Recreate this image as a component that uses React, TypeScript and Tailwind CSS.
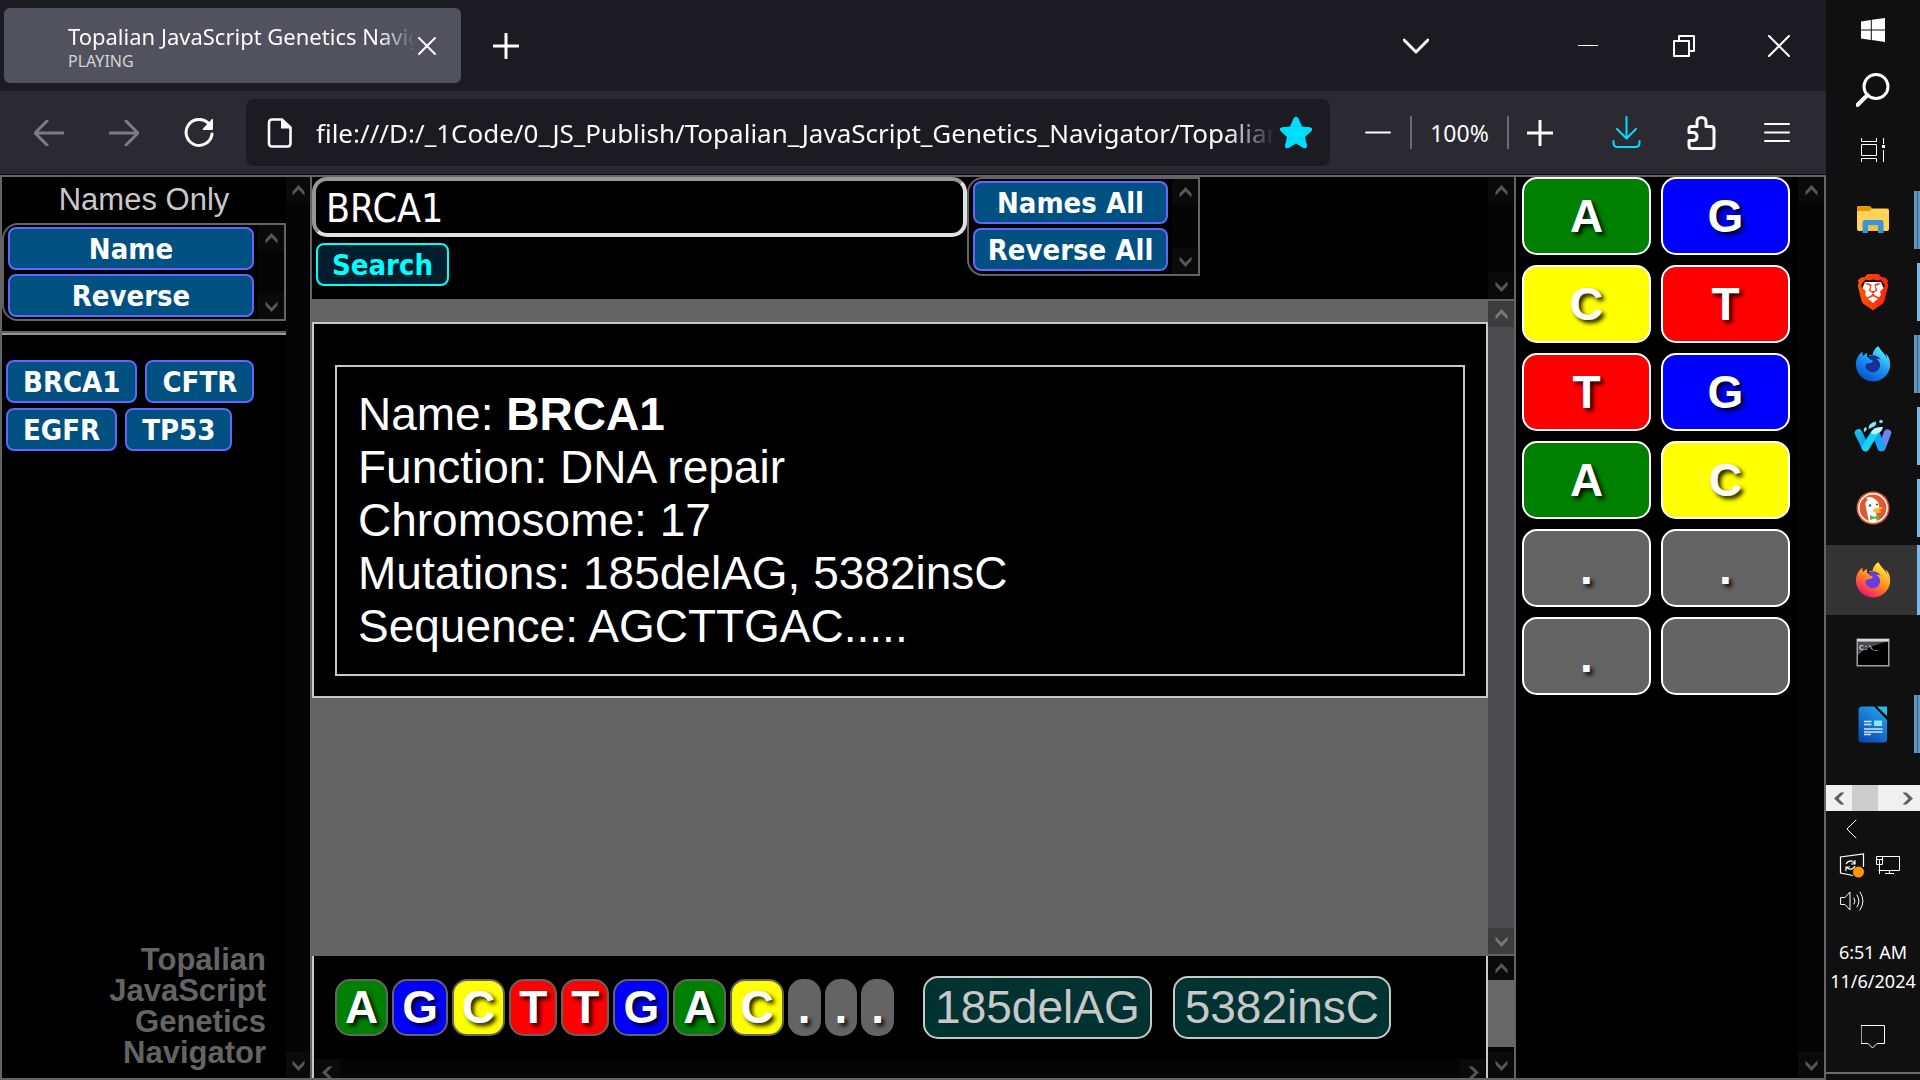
import type { ReactNode } from "react";
import { SiBrave } from "react-icons/si";
import { FaFirefoxBrowser } from "react-icons/fa";

const DEJAVU = "font-['DejaVu_Sans_Condensed','DejaVu_Sans',sans-serif]";
const ARIAL = "font-['Liberation_Sans',Arial,sans-serif]";

type Direction = "up" | "down" | "left" | "right";

const arrowPaths: Record<Direction, string> = {
  up: "M0.500 11.500V7.500L6.500 1L12.500 7.500V11.500L6.500 5.500Z",
  down: "M0.500 1.500V5.500L6.500 12L12.500 5.500V1.500L6.500 7.500Z",
  left: "M11.500 0.500H7.500L1 6.500L7.500 12.500H11.500L5.500 6.500Z",
  right: "M1.500 0.500H5.500L12 6.500L5.500 12.500H1.500L7.500 6.500Z",
};

function ScrollArrow({ dir, className }: { dir: Direction; className: string }) {
  return (
    <button
      type="button"
      aria-label={`Scroll ${dir}`}
      className={`flex shrink-0 items-center justify-center overflow-hidden ${className}`}
    >
      <svg width="13" height="13" viewBox="0 0 13 13" fill="currentColor">
        <path d={arrowPaths[dir]} />
      </svg>
    </button>
  );
}

function VScroll({ tone = "dark", width = "w-[26px]" }: { tone?: "dark" | "gray"; width?: string }) {
  const button =
    tone === "dark"
      ? "h-[26px] w-full bg-[#0a0a0b] text-[#56565a]"
      : "h-[26px] w-full bg-[#3c3c3d] text-[#77777b]";
  return (
    <div
      className={`flex shrink-0 flex-col justify-between ${width} ${
        tone === "dark" ? "bg-[#050506]" : "bg-[#4c4c4e]"
      }`}
    >
      <ScrollArrow dir="up" className={button} />
      <ScrollArrow dir="down" className={button} />
    </div>
  );
}

function Stroke({
  w,
  h,
  d,
  sw = 2,
  className = "",
}: {
  w: number;
  h: number;
  d: string;
  sw?: number;
  className?: string;
}) {
  return (
    <svg
      width={w}
      height={h}
      viewBox={`0 0 ${w} ${h}`}
      fill="none"
      stroke="currentColor"
      strokeWidth={sw}
      strokeLinecap="round"
      strokeLinejoin="round"
      className={className}
    >
      <path d={d} />
    </svg>
  );
}

function IconButton({
  label,
  className,
  children,
}: {
  label: string;
  className: string;
  children: ReactNode;
}) {
  return (
    <button type="button" aria-label={label} className={`flex shrink-0 items-center justify-center ${className}`}>
      {children}
    </button>
  );
}

function TitleBar() {
  return (
    <div className="flex h-[91px] items-center bg-[#1c1b22] pl-1">
      <div className="flex h-[75px] w-[457px] items-center rounded-md bg-[#52525e] pr-[22px] pl-16">
        <div className="min-w-0 flex-1 overflow-hidden">
          <div className="overflow-hidden text-[22px] leading-[30px] whitespace-nowrap text-[#fbfbfe] [mask-image:linear-gradient(to_right,black_90%,transparent)]">
            Topalian JavaScript Genetics Navigator
          </div>
          <div className="text-base leading-5 text-[#d4d4da]">PLAYING</div>
        </div>
        <IconButton label="Close tab" className="h-9 w-6 text-white">
          <Stroke w={18} h={18} d="M1 1L17 17M17 1L1 17" />
        </IconButton>
      </div>
      <IconButton label="New tab" className="ml-5 h-14 w-[50px] text-white">
        <Stroke w={26} h={26} d="M13 1V25M1 13H25" sw={3} />
      </IconButton>
      <div className="flex-1" />
      <IconButton label="List all tabs" className="mr-[77px] h-14 w-[94px] text-white">
        <Stroke w={26} h={16} d="M1 2L13 14L25 2" sw={3} />
      </IconButton>
      <IconButton label="Minimize" className="h-14 w-24 text-white">
        <Stroke w={20} h={1} d="M0 0.500H20" sw={1} />
      </IconButton>
      <IconButton label="Restore" className="h-14 w-24 text-white">
        <Stroke w={22} h={22} d="M1 6H16V21H1ZM6 6V1H21V16H16" />
      </IconButton>
      <IconButton label="Close window" className="h-14 w-[94px] text-white">
        <Stroke w={22} h={22} d="M1 1L21 21M21 1L1 21" />
      </IconButton>
    </div>
  );
}

function ToolBar() {
  return (
    <div className="flex h-[83px] items-center bg-[#2b2a33] px-3 text-[#fbfbfe]">
      <IconButton label="Back" className="h-16 w-[74px] text-[#7d7c84]">
        <Stroke w={30} h={26} d="M29 13H1M13 1L1 13L13 25" sw={3} />
      </IconButton>
      <IconButton label="Forward" className="h-16 w-[75px] text-[#7d7c84]">
        <Stroke w={30} h={26} d="M1 13H29M17 1L29 13L17 25" sw={3} />
      </IconButton>
      <IconButton label="Reload" className="h-16 w-[75px]">
        <svg width="30" height="30" viewBox="0 0 30 30" fill="none">
          <path d="M25 6A13 13 0 1 0 28 16" stroke="currentColor" strokeWidth="3" strokeLinecap="round" />
          <path d="M29 1V11Q29 12 28 12H19Q18 11.500 19 10.500L28 1Z" fill="currentColor" />
        </svg>
      </IconButton>
      <div className="ml-2.5 flex h-[67px] min-w-0 flex-1 items-center rounded-lg bg-[#1c1b22] px-[17px]">
        <svg width="30" height="30" viewBox="0 0 30 30" className="mr-5 ml-[3px] shrink-0">
          <path
            d="M6 1.500H16L24.500 9.500V25Q24.500 28.500 21.500 28.500H6Q3 28.500 3 25V5Q3 1.500 6 1.500Z"
            fill="none"
            stroke="currentColor"
            strokeWidth="2.600"
          />
          <path d="M15 1V10.500H25Z" fill="currentColor" />
        </svg>
        <input
          aria-label="Address"
          readOnly
          value="file:///D:/_1Code/0_JS_Publish/Topalian_JavaScript_Genetics_Navigator/Topalian_JavaScript_Genetics_Navigator.html"
          className="h-10 min-w-0 flex-1 bg-transparent text-[26px] leading-10 outline-none [mask-image:linear-gradient(to_right,black_95%,transparent)]"
        />
        <button type="button" aria-label="Bookmark this page" className="ml-1 shrink-0 text-[#00ddff]">
          <svg width="34" height="33" viewBox="0 0 34 33" fill="currentColor">
            <path d="M14.500 2.500Q17-1.500 19.500 2.500L23 10.500L31 11.200Q35 12 32 15.500L26 21L28 29.500Q28 33.500 24 31.800L17 27.500L10 31.800Q6 33.500 6 29.500L8 21L2 15.500Q-1 12 3 11.200L11 10.500Z" />
          </svg>
        </button>
      </div>
      <IconButton label="Zoom out" className="ml-[15px] h-14 w-[65px]">
        <Stroke w={26} h={3} d="M1 1.500H25" sw={2} />
      </IconButton>
      <div className="h-[33px] w-[2px] bg-[#6b6a72]" />
      <button type="button" className="w-[95px] text-[23px] leading-8">
        100%
      </button>
      <div className="h-[33px] w-[2px] bg-[#6b6a72]" />
      <IconButton label="Zoom in" className="h-14 w-[62px]">
        <Stroke w={26} h={26} d="M13 1V25M1 13H25" sw={3} />
      </IconButton>
      <IconButton label="Downloads" className="ml-[18px] h-14 w-[75px] text-[#00ddff]">
        <Stroke w={29} h={33} d="M14.500 1V22M5 13L14.500 22.500L24 13M1.500 25V27Q1.500 31 5.500 31H23.500Q27.500 31 27.500 27V25" sw={2} />
      </IconButton>
      <IconButton label="Extensions" className="h-14 w-[75px]">
        <Stroke
          w={29}
          h={34}
          sw={3}
          d="M4 10.500H10V6Q10 1.500 14.500 1.500Q19 1.500 19 6V10.500H24Q27 10.500 27 13.500V29.500Q27 32.500 24 32.500H5Q2 32.500 2 29.500V24.500H6Q10 24.500 10 20.500Q10 16.500 6 16.500H2V13Q2 10.500 4 10.500Z"
        />
      </IconButton>
      <IconButton label="Open menu" className="h-14 w-[75px]">
        <Stroke w={26} h={21} d="M1 2H25M1 10.500H25M1 19H25" />
      </IconButton>
    </div>
  );
}

const blueButton = `${DEJAVU} rounded-lg border-2 border-[#6464ff] bg-[#005082] pt-[2px] text-[29px] font-bold leading-[37px] text-white`;

function SortBox({ labels, className }: { labels: string[]; className: string }) {
  return (
    <div className={`flex overflow-hidden rounded-l-2xl border-2 border-[#646464] ${className}`}>
      <div className="flex min-w-0 flex-1 flex-col gap-1 py-[2px] pr-1 pl-1">
        {labels.map((label) => (
          <button key={label} type="button" className={blueButton}>
            {label}
          </button>
        ))}
      </div>
      <VScroll />
    </div>
  );
}

function NamesPanel() {
  return (
    <nav className="flex w-[310px] shrink-0 border-l-2 border-[#646464] bg-black">
      <div className={`flex min-w-0 flex-1 flex-col ${ARIAL}`}>
        <h2 className="pt-[5px] text-center text-[31px] leading-[36px] text-[#c8c8c8]">Names Only</h2>
        <SortBox labels={["Name", "Reverse"]} className="mt-[5px] h-[98px]" />
        <div className="mt-[10px] h-1 border-t-2 border-b-2 border-t-[#646464] border-b-[#969696]" />
        <div className="mt-[25px] flex flex-wrap gap-x-2 gap-y-[5px] pl-1">
          {["BRCA1", "CFTR", "EGFR", "TP53"].map((gene) => (
            <button key={gene} type="button" className={`${blueButton} px-[15px]`}>
              {gene}
            </button>
          ))}
        </div>
        <h1 className="mt-auto ml-auto w-[180px] pr-5 pb-[10px] text-right text-[31px] leading-[31px] font-bold text-[#646464]">
          Topalian JavaScript Genetics Navigator
        </h1>
      </div>
      <VScroll width="w-6" />
    </nav>
  );
}

function SearchPanel() {
  return (
    <div className="flex h-[122px] bg-black">
      <div className="flex min-w-0 flex-1 items-start">
        <div className="w-[655px]">
          <input
            aria-label="Gene name"
            defaultValue="BRCA1"
            className={`block h-[60px] w-full rounded-[15px] border-4 border-t-[#969696] border-r-[#e1e1e1] border-b-[#e1e1e1] border-l-[#969696] bg-black px-[10px] pt-[2px] text-[39px] text-white outline-none ${DEJAVU}`}
          />
          <button
            type="button"
            className={`mt-[6px] ml-1 rounded-lg border-2 border-[#00ffff] bg-[#001e2d] px-[14px] pt-[2px] text-[29px] leading-[37px] font-bold text-[#00ffff] ${DEJAVU}`}
          >
            Search
          </button>
        </div>
        <SortBox labels={["Names All", "Reverse All"]} className="h-[99px] w-[233px]" />
      </div>
      <VScroll />
    </div>
  );
}

function ResultPanel() {
  return (
    <div className="flex min-h-0 flex-1 border-y-2 border-[#646464] bg-[#646464]">
      <div className="min-w-0 flex-1 pt-[21px]">
        <div className="border-2 border-[#c8c8c8] bg-black px-[21px] pt-[41px] pb-5">
          <div className={`border-2 border-[#c8c8c8] p-[21px] text-[46px] leading-[53px] text-white ${ARIAL}`}>
            <p>
              Name: <b>BRCA1</b>
            </p>
            <p>Function: DNA repair</p>
            <p>Chromosome: 17</p>
            <p>Mutations: 185delAG, 5382insC</p>
            <p>Sequence: AGCTTGAC.....</p>
          </div>
        </div>
      </div>
      <VScroll tone="gray" />
    </div>
  );
}

const baseColors: Record<string, string> = {
  A: "bg-[#008000]",
  G: "bg-[#0000ff]",
  C: "bg-[#ffff00]",
  T: "bg-[#ff0000]",
  ".": "bg-[#646464]",
  "": "bg-[#646464]",
};

const baseText = `${ARIAL} text-[46px] font-bold leading-[53px] text-white [text-shadow:3px_3px_4px_rgba(0,0,0,0.9)]`;

function SequencePanel() {
  return (
    <div className="flex h-[122px] bg-black">
      <div className="flex min-w-0 flex-1 flex-col border-x-2 border-[#c8c8c8]">
        <div className="flex min-h-0 flex-1 items-center pl-[21px]">
          <div className="flex gap-1">
            {[..."AGCTTGAC..."].map((base, i) => (
              <button
                key={i}
                type="button"
                className={`${baseText} ${baseColors[base]} rounded-[15px] border-2 border-[#646464] px-2`}
              >
                {base}
              </button>
            ))}
          </div>
          <div className="ml-[29px] flex gap-[21px]">
            {["185delAG", "5382insC"].map((mutation) => (
              <button
                key={mutation}
                type="button"
                className={`${ARIAL} rounded-[15px] border-2 border-[#c8c8c8] bg-[#003232] px-[10px] py-[3px] text-[46px] leading-[53px] text-[#c8c8c8]`}
              >
                {mutation}
              </button>
            ))}
          </div>
        </div>
        <div className="flex h-[19px] items-start justify-between overflow-hidden bg-[#050506]">
          <ScrollArrow dir="left" className="h-[26px] w-[26px] bg-[#0a0a0b] text-[#56565a]" />
          <ScrollArrow dir="right" className="h-[26px] w-[26px] bg-[#0a0a0b] text-[#56565a]" />
        </div>
      </div>
      <div className="flex w-[26px] flex-col bg-[#050506]">
        <ScrollArrow dir="up" className="h-6 w-full bg-[#0a0a0b] text-[#56565a]" />
        <div className="h-[67px] bg-[#686868]" />
        <div className="flex-1" />
        <ScrollArrow dir="down" className="h-[26px] w-full bg-[#0a0a0b] text-[#56565a]" />
      </div>
    </div>
  );
}

function BasesPanel() {
  return (
    <aside className="flex w-[312px] shrink-0 border-x-2 border-[#646464] bg-black">
      <div className="grid flex-1 grid-cols-2 content-start gap-[10px] pr-2 pl-[6px]">
        {["A", "G", "C", "T", "T", "G", "A", "C", ".", ".", ".", ""].map((base, i) => (
          <button
            key={i}
            type="button"
            aria-label={base || "Empty base"}
            className={`${baseText} ${baseColors[base]} h-[78px] rounded-[15px] border-2 border-white`}
          >
            {base}
          </button>
        ))}
      </div>
      <VScroll />
    </aside>
  );
}

function WindowsLogo() {
  return (
    <svg width="24" height="24" viewBox="0 0 24 24" fill="#fff">
      <path d="M0 3.400L9.800 2V11.400H0ZM10.800 1.800L24 0V11.400H10.800ZM0 12.400H9.800V21.900L0 20.500ZM10.800 12.400H24V24L10.800 22.100Z" />
    </svg>
  );
}

function SearchGlyph() {
  return (
    <svg width="34" height="34" viewBox="0 0 34 34" fill="none" stroke="#fff" strokeWidth="3">
      <circle cx="20" cy="13.500" r="12" />
      <path d="M11.500 22L1.500 32" strokeWidth="4" strokeLinecap="round" />
    </svg>
  );
}

function TaskViewGlyph() {
  return (
    <svg width="24" height="24" viewBox="0 0 24 24" fill="none" stroke="#fff" strokeWidth="1">
      <path d="M0.500 0V3.500H15.500V0M0.500 6.500H15.500V17.500H0.500ZM0.500 24V20.500H15.500V24M22.500 0V6M22.500 12V24" />
      <path d="M21 7H24V10H21Z" fill="#fff" stroke="none" />
    </svg>
  );
}

function ExplorerIcon() {
  return (
    <svg width="34" height="30" viewBox="0 0 34 30">
      <path d="M1 3Q1 1 3 1H13L16 3.500H31Q33 3.500 33 5.500V24Q33 26 31 26H3Q1 26 1 24Z" fill="#ffd35a" />
      <path d="M1 6V3Q1 1 3 1H13Q15 1 16 3.500Q15 6 13 6Z" fill="#e09b00" />
      <path d="M6.500 28V17.500Q6.500 15 9 15H25Q27.500 15 27.500 17.500V28H22V20.500H12V28Z" fill="#3a94d8" />
      <path d="M12 20.500H22V26H12Z" fill="#f5c13c" />
    </svg>
  );
}

function BraveIcon() {
  return (
    <svg width="36" height="36" viewBox="0 0 36 36">
      <defs>
        <linearGradient id="brave" x1="0" x2="1">
          <stop offset="0" stopColor="#ff5500" />
          <stop offset="1" stopColor="#ff2010" />
        </linearGradient>
      </defs>
      <path d="M10 8H26L29 15L24 27L18 31L12 27L7 15Z" fill="#fff" />
      <SiBrave size={36} fill="url(#brave)" />
    </svg>
  );
}

function FoxIcon({ id, colors, core }: { id: string; colors: [string, string, string]; core: string }) {
  return (
    <svg width="36" height="36" viewBox="0 0 36 36">
      <defs>
        <linearGradient id={id} gradientUnits="userSpaceOnUse" x1="400" y1="60" x2="140" y2="480">
          <stop offset="0" stopColor={colors[0]} />
          <stop offset="0.500" stopColor={colors[1]} />
          <stop offset="1" stopColor={colors[2]} />
        </linearGradient>
      </defs>
      <circle cx="18" cy="19" r="9" fill={core} />
      <FaFirefoxBrowser size={36} fill={`url(#${id})`} />
    </svg>
  );
}

function WaterfoxIcon() {
  return (
    <svg width="38" height="34" viewBox="0 0 38 34" fill="none" strokeLinecap="round" strokeLinejoin="round">
      <defs>
        <linearGradient id="waterfox" gradientUnits="userSpaceOnUse" x1="1" y1="10" x2="15" y2="32">
          <stop offset="0" stopColor="#1dc3ea" />
          <stop offset="1" stopColor="#0d8cf0" />
        </linearGradient>
      </defs>
      <path d="M33.500 14L28 28.500" stroke="#6a86ee" strokeWidth="7.500" />
      <path d="M22 14L27 28.500" stroke="#12a5f8" strokeWidth="7.500" />
      <path d="M4.500 14L11.500 28.500" stroke="url(#waterfox)" strokeWidth="7.500" />
      <path d="M11.500 28.500L20 15" stroke="#12d3ff" strokeWidth="7.500" />
      <path d="M17 14Q19 7 29 8Q28 14 20 15.500Z" fill="#c5f5ff" />
      <path d="M14.500 10Q14 4 22 2.500Q23 7 18 8.500Z" fill="#7fe6f5" />
      <circle cx="27" cy="2.500" r="1.800" fill="#6fdcf0" />
      <path d="M10 13Q9 9 12 8Q14 11 10 13Z" fill="#7fe6f5" />
    </svg>
  );
}

function DuckIcon() {
  return (
    <svg width="34" height="34" viewBox="0 0 34 34">
      <circle cx="17" cy="17" r="16.500" fill="#de5833" />
      <circle cx="17" cy="17" r="14.200" fill="#de5833" stroke="#fff" strokeWidth="1.400" />
      <path d="M10 7Q15 4 20 9Q24 12 23 18L20 20L21 31Q17 32 13 30.500Q11 22 9.500 14Q9 10 12 9Z" fill="#fff" />
      <circle cx="14" cy="14.500" r="1.200" fill="#2d4f8e" />
      <circle cx="21" cy="13.500" r="1.100" fill="#2d4f8e" />
      <path d="M17 18.500Q20 16.500 27 16Q27 18 22 19.500Q26 20 25 21.500Q18 23 17 20Z" fill="#fdb92c" />
      <path d="M14 24L18 26L23 24V29L18.500 27.500L14 29Z" fill="#4cba3c" />
    </svg>
  );
}

function TerminalIcon() {
  return (
    <svg width="34" height="29" viewBox="0 0 34 29">
      <path d="M0.500 0.500H33.500V28.500H0.500Z" fill="#9aa0a6" />
      <path d="M1 1H33V3H1Z" fill="#d6dadf" />
      <path d="M2 4H32V27H2Z" fill="#000" />
      <path d="M2 4H30Q12 8 2 17Z" fill="#4b4b4b" />
      <text x="3" y="12" fontSize="8" fill="#fff" fontFamily="Liberation Mono, monospace">
        C:\_
      </text>
    </svg>
  );
}

function WriterIcon() {
  return (
    <svg width="30" height="37" viewBox="0 0 30 37">
      <defs>
        <linearGradient id="writer" x1="0.800" y1="0" x2="0.200" y2="1">
          <stop offset="0" stopColor="#1fa6ea" />
          <stop offset="1" stopColor="#0d47b5" />
        </linearGradient>
      </defs>
      <path d="M4 0.500H16L29 14V33Q29 36.500 26 36.500H4Q0.500 36.500 0.500 33V4Q0.500 0.500 4 0.500Z" fill="url(#writer)" />
      <path d="M19 0.500H29V10Z" fill="#26baf2" />
      <path d="M16 14.500H24V20H16Z" fill="#8fe3f8" />
      <path d="M6 15.500H13.500M6 18.500H13.500M6 23H24.500M6 26H24.500M6 28.500H13" stroke="#cfe8fb" strokeWidth="1.300" />
    </svg>
  );
}

type Task = { name: string; icon: ReactNode; mark: "none" | "single" | "double"; active?: boolean };

const tasks: Task[] = [
  { name: "File Explorer", icon: <ExplorerIcon />, mark: "double" },
  { name: "Brave", icon: <BraveIcon />, mark: "single" },
  {
    name: "Firefox Developer Edition",
    icon: <FoxIcon id="foxdev" colors={["#4fe3fb", "#1593f5", "#0a52c8"]} core="#1b2f96" />,
    mark: "double",
  },
  { name: "Waterfox", icon: <WaterfoxIcon />, mark: "single" },
  { name: "DuckDuckGo", icon: <DuckIcon />, mark: "single" },
  {
    name: "Firefox",
    icon: <FoxIcon id="fox" colors={["#ffe63e", "#ff8a1c", "#f0156e"]} core="#6a3be0" />,
    mark: "single",
    active: true,
  },
  { name: "Command Prompt", icon: <TerminalIcon />, mark: "none" },
  { name: "LibreOffice Writer", icon: <WriterIcon />, mark: "double" },
];

function Taskbar() {
  return (
    <aside className="flex w-[94px] shrink-0 flex-col bg-[#101010] text-white">
      <IconButton label="Start" className="h-[60px] w-full">
        <WindowsLogo />
      </IconButton>
      <IconButton label="Search" className="h-[60px] w-full">
        <SearchGlyph />
      </IconButton>
      <IconButton label="Task View" className="h-[60px] w-full">
        <TaskViewGlyph />
      </IconButton>
      <div className="mt-1 flex flex-col">
        {tasks.map((task) => (
          <button
            key={task.name}
            type="button"
            aria-label={task.name}
            className="relative flex h-[72px] items-center justify-center"
          >
            {task.active && <span className="absolute inset-x-0 inset-y-[1px] bg-[#333333]" />}
            <span className="relative">{task.icon}</span>
            {task.mark === "single" && (
              <span
                className={
                  task.active
                    ? "absolute inset-y-[1px] right-0 w-[3px] bg-[#76b9ed]"
                    : "absolute inset-y-[7px] right-0 w-[3px] bg-[#76b9ed]"
                }
              />
            )}
            {task.mark === "double" && (
              <span className="absolute inset-y-[7px] right-0 flex w-[6px]">
                <span className="w-[3px] bg-[#5f94be]" />
                <span className="w-[1px] bg-[#3f627e]" />
                <span className="w-[2px] bg-[#5f94be]" />
              </span>
            )}
          </button>
        ))}
      </div>
      <div className="mt-[25px] flex h-[26px] items-stretch bg-[#f0f0f0] text-[#606060]">
        <ScrollArrow dir="left" className="w-[26px]" />
        <div className="w-[26px] bg-[#cdcdcd]" />
        <div className="flex-1" />
        <ScrollArrow dir="right" className="w-[26px]" />
      </div>
      <IconButton label="Show hidden icons" className="h-9 w-[52px]">
        <Stroke w={12} h={20} d="M10 1L1 10L10 19" sw={1} />
      </IconButton>
      <div className="flex h-9 items-center gap-[9px] pl-[13px]">
        <button type="button" aria-label="Windows Update">
          <svg width="26" height="26" viewBox="0 0 26 26" fill="none" stroke="#fff">
            <path d="M24.500 15V2L1.500 5V21L14 23.500M24.500 2" strokeWidth="1.200" />
            <path d="M7 12Q9 8.500 13 9L16 11.500M16 8V12H12M16 14Q14 18 10 17L7 15M7 19V15H11" strokeWidth="1.200" />
            <circle cx="19.500" cy="20" r="5.500" fill="#ff9800" stroke="none" />
          </svg>
        </button>
        <button type="button" aria-label="Network">
          <svg width="28" height="24" viewBox="0 0 28 24" fill="none" stroke="#fff">
            <path d="M8.500 3.500H25.500V17.500H4.500M15.500 17.500V20.500M11 20.500H20M2.500 3.500H8.500V11.500H2.500ZM2.500 6.500H8.500M5.500 6.500V21" />
          </svg>
        </button>
      </div>
      <IconButton label="Volume" className="h-9 w-[52px]">
        <Stroke w={24} h={20} sw={1} d="M1 6.500H5L10 1V19L5 13.500H1ZM14 7Q16 10 14 13M17 4Q21 10 17 16M20 1Q26 10 20 19" />
      </IconButton>
      <time className="mt-[19px] text-center text-[18px] leading-[29px]">
        6:51 AM
        <br />
        11/6/2024
      </time>
      <IconButton label="Notifications" className="mt-4 h-[50px] w-full">
        <Stroke w={24} h={24} sw={1} d="M0.500 0.500H23.500V18.500H16L11.500 23L7 18.500H0.500Z" />
      </IconButton>
      <div className="mt-auto h-2 border-t-2 border-[#6b6b6b]" />
    </aside>
  );
}

export default function App() {
  return (
    <div className="flex h-screen w-full overflow-hidden bg-black font-['Noto_Sans','Open_Sans',sans-serif]">
      <div className="flex min-w-0 flex-1 flex-col">
        <TitleBar />
        <ToolBar />
        <div className="flex min-h-0 flex-1 flex-col border-t border-[#0c0c0d]">
          <div className="flex min-h-0 flex-1 border-y-[2px] border-[#646464]">
            <NamesPanel />
            <main className="flex min-w-0 flex-1 flex-col border-l-2 border-[#646464]">
              <SearchPanel />
              <ResultPanel />
              <SequencePanel />
            </main>
            <BasesPanel />
          </div>
        </div>
      </div>
      <Taskbar />
    </div>
  );
}
